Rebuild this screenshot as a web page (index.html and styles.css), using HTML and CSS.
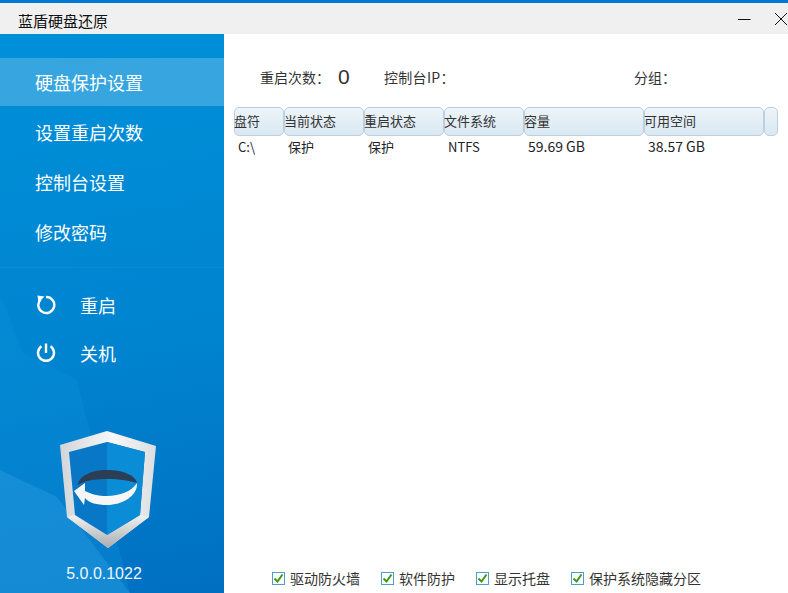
FILE: index.html
```html
<!DOCTYPE html>
<html lang="en">
<head>
    <meta charset="UTF-8">
    <meta name="viewport" content="width=device-width, initial-scale=1.0">
    <title>蓝盾硬盘还原</title>
    <link rel="stylesheet" href="styles.css">
</head>
<body>
    <div class="window">
        <div class="titlebar">
            <span class="app-title">蓝盾硬盘还原</span>
            <div class="win-buttons">
                <svg width="14" height="14" viewBox="0 0 14 14"><path d="M1 7.5H13.5" stroke="#111" stroke-width="1" fill="none"/></svg>
                <svg width="14" height="14" viewBox="0 0 14 14"><path d="M1 1L13 13M13 1L1 13" stroke="#111" stroke-width="1" fill="none"/></svg>
            </div>
        </div>
        <div class="main">
            <div class="sidebar">
                <svg class="side-bg" width="224" height="559" viewBox="0 0 224 559">
                    <path d="M0 259L23 319L77 346L130 559H0Z" fill="#0b8fd8" opacity="0.4"/>
                    <path d="M0 436L57 463L130 559H0Z" fill="#2a9be0" opacity="0.45"/>
                </svg>
                <div class="nav">
                    <div class="nav-item active">硬盘保护设置</div>
                    <div class="nav-item">设置重启次数</div>
                    <div class="nav-item">控制台设置</div>
                    <div class="nav-item">修改密码</div>
                </div>
                <div class="actions">
                    <div class="action">
                        <svg width="20" height="20" viewBox="0 0 20 20"><path d="M4.6 4.4A8 8 0 1 0 10 2" fill="none" stroke="#fff" stroke-width="2.4"/><path d="M1.5 0.5L8.5 1.5L2.5 7.5Z" fill="#fff"/></svg>
                        <span>重启</span>
                    </div>
                    <div class="action">
                        <svg width="20" height="20" viewBox="0 0 20 20"><path d="M5.5 3.2A8 8 0 1 0 14.5 3.2" fill="none" stroke="#fff" stroke-width="2.4"/><path d="M10 0.5V10" stroke="#fff" stroke-width="2.4"/></svg>
                        <span>关机</span>
                    </div>
                </div>
                <div class="brand">
                    <svg width="98" height="120" viewBox="0 0 98 120">
                        <defs>
                            <linearGradient id="rim" x1="0" y1="0" x2="1" y2="0">
                                <stop offset="0" stop-color="#d2d5d8"/>
                                <stop offset="0.55" stop-color="#f7f7f7"/>
                                <stop offset="1" stop-color="#dcdee0"/>
                            </linearGradient>
                            <linearGradient id="rimlow" x1="0" y1="0" x2="0" y2="1">
                                <stop offset="0" stop-color="#f2f2f2"/>
                                <stop offset="1" stop-color="#a9abae"/>
                            </linearGradient>
                        </defs>
                        <path d="M47 0L96 15L89 86L48 117L7 86L0 14Z" fill="url(#rim)"/>
                        <path d="M7 86L15 84L47 104L80 84L89 86L48 117Z" fill="url(#rimlow)"/>
                        <path d="M47 11L85 21L80 84L47 104L15 84L9 21Z" fill="#0877c6"/>
                        <path d="M47 11L85 21L80 84L47 104Z" fill="#0a8cd6"/>
                        <path d="M18 54C19 45 31 39 47 39C64 39 76 45 77 52C70 50 60 48 47 48C33 48 24 50 18 54Z" fill="#2c3e55"/>
                        <path d="M77 52C78 65 62 74 47 74C37 74 29 72 25 67L24 74L14 60L25 52L25 60C31 63 38 65 47 65C60 65 72 60 77 52Z" fill="#f6f6f6"/>
                    </svg>
                    <div class="version">5.0.0.1022</div>
                </div>
            </div>
            <div class="content">
                <div class="info-row">
                    <span class="info-restart">重启次数：</span>
                    <span class="count">0</span>
                    <span class="info-console">控制台IP：</span>
                    <span>分组：</span>
                </div>
                <div class="disk-table">
                    <div class="th">盘符</div>
                    <div class="th">当前状态</div>
                    <div class="th">重启状态</div>
                    <div class="th">文件系统</div>
                    <div class="th">容量</div>
                    <div class="th">可用空间</div>
                    <div class="th"></div>
                    <div class="td">C:\</div>
                    <div class="td">保护</div>
                    <div class="td">保护</div>
                    <div class="td">NTFS</div>
                    <div class="td size">59.69 GB</div>
                    <div class="td size">38.57 GB</div>
                    <div class="td"></div>
                </div>
                <div class="options">
                    <label class="option"><span class="check"><svg width="13" height="13" viewBox="0 0 13 13"><path d="M2.5 6.5L5.5 9.5L10.5 2.5" fill="none" stroke="#3c9a14" stroke-width="2"/></svg></span>驱动防火墙</label>
                    <label class="option"><span class="check"><svg width="13" height="13" viewBox="0 0 13 13"><path d="M2.5 6.5L5.5 9.5L10.5 2.5" fill="none" stroke="#3c9a14" stroke-width="2"/></svg></span>软件防护</label>
                    <label class="option"><span class="check"><svg width="13" height="13" viewBox="0 0 13 13"><path d="M2.5 6.5L5.5 9.5L10.5 2.5" fill="none" stroke="#3c9a14" stroke-width="2"/></svg></span>显示托盘</label>
                    <label class="option"><span class="check"><svg width="13" height="13" viewBox="0 0 13 13"><path d="M2.5 6.5L5.5 9.5L10.5 2.5" fill="none" stroke="#3c9a14" stroke-width="2"/></svg></span>保护系统隐藏分区</label>
                </div>
            </div>
        </div>
    </div>
</body>
</html>
```

FILE: styles.css
```css
html, body {
    margin: 0;
    padding: 0;
    height: 100%;
    overflow: hidden;
}
body {
    font-family: "Noto Sans CJK SC", "Liberation Sans", sans-serif;
    background-color: white;
    color: #333;
}
.window {
    height: 593px;
    display: flex;
    flex-direction: column;
}
.titlebar {
    height: 31px;
    flex: none;
    border-top: 3px solid #0078d4;
    background-color: #f0f0f0;
    display: flex;
    align-items: center;
    justify-content: space-between;
    padding: 0 0 0 18px;
}
.app-title {
    font-size: 15px;
    color: #111;
    padding-top: 4px;
}
.win-buttons {
    display: flex;
    gap: 23px;
    margin-top: 1px;
}
.main {
    flex: 1;
    display: flex;
    min-height: 0;
}
.sidebar {
    width: 224px;
    flex: none;
    position: relative;
    display: flex;
    flex-direction: column;
    color: white;
    background: linear-gradient(170deg, #0090d9 0%, #0084d0 55%, #006fc2 100%);
}
.side-bg {
    position: absolute;
    left: 0;
    top: 0;
}
.nav {
    position: relative;
    padding-top: 24px;
    padding-bottom: 9px;
    border-bottom: 1px solid #0b8cd6;
}
.nav-item {
    height: 50px;
    line-height: 48px;
    padding-left: 35px;
    font-size: 18px;
}
.nav-item.active {
    height: 48px;
    margin-bottom: 2px;
    background-color: #36a5e0;
}
.actions {
    position: relative;
    padding-top: 13px;
}
.action {
    height: 48px;
    display: flex;
    align-items: center;
    gap: 24px;
    padding-left: 36px;
    font-size: 18px;
}
.brand {
    position: relative;
    margin-top: auto;
    display: flex;
    flex-direction: column;
    align-items: center;
    padding-bottom: 10px;
}
.brand svg {
    margin-left: -6px;
}
.version {
    margin-top: 14px;
    margin-left: -16px;
    font-family: "Liberation Sans", sans-serif;
    font-size: 16px;
    line-height: 18px;
    color: #eef6fc;
}
.content {
    flex: 1;
    padding: 29px 10px 0;
    display: flex;
    flex-direction: column;
    min-width: 0;
}
.info-row {
    display: flex;
    align-items: center;
    height: 28px;
    padding-left: 26px;
    font-size: 14px;
}
.info-restart {
    width: 78px;
}
.count {
    width: 46px;
    font-family: "Liberation Sans", sans-serif;
    font-size: 21px;
}
.info-console {
    width: 250px;
    letter-spacing: 0.3px;
}
.disk-table {
    margin-top: 16px;
    display: grid;
    grid-template-columns: 50px 80px 80px 80px 120px 120px 14px;
    grid-template-rows: 29px 22px;
    font-size: 13px;
}
.th {
    border: 1px solid #bcd0de;
    border-radius: 5px;
    background: linear-gradient(#eef4f9, #d9e8f3);
    line-height: 26px;
    text-indent: -1px;
    white-space: nowrap;
    box-sizing: border-box;
}
.td {
    padding-left: 4px;
    line-height: 21px;
    color: #222;
}
.td.size {
    font-size: 14px;
}
.options {
    margin-top: auto;
    display: flex;
    padding-left: 38px;
    padding-bottom: 5px;
    font-size: 14px;
}
.option {
    display: flex;
    align-items: center;
    gap: 5px;
    margin-right: 21px;
    line-height: 20px;
}
.check {
    width: 11px;
    height: 11px;
    border: 1px solid #4f9cd0;
    display: flex;
    background-color: white;
}
.check svg {
    margin: -1px;
}
```
